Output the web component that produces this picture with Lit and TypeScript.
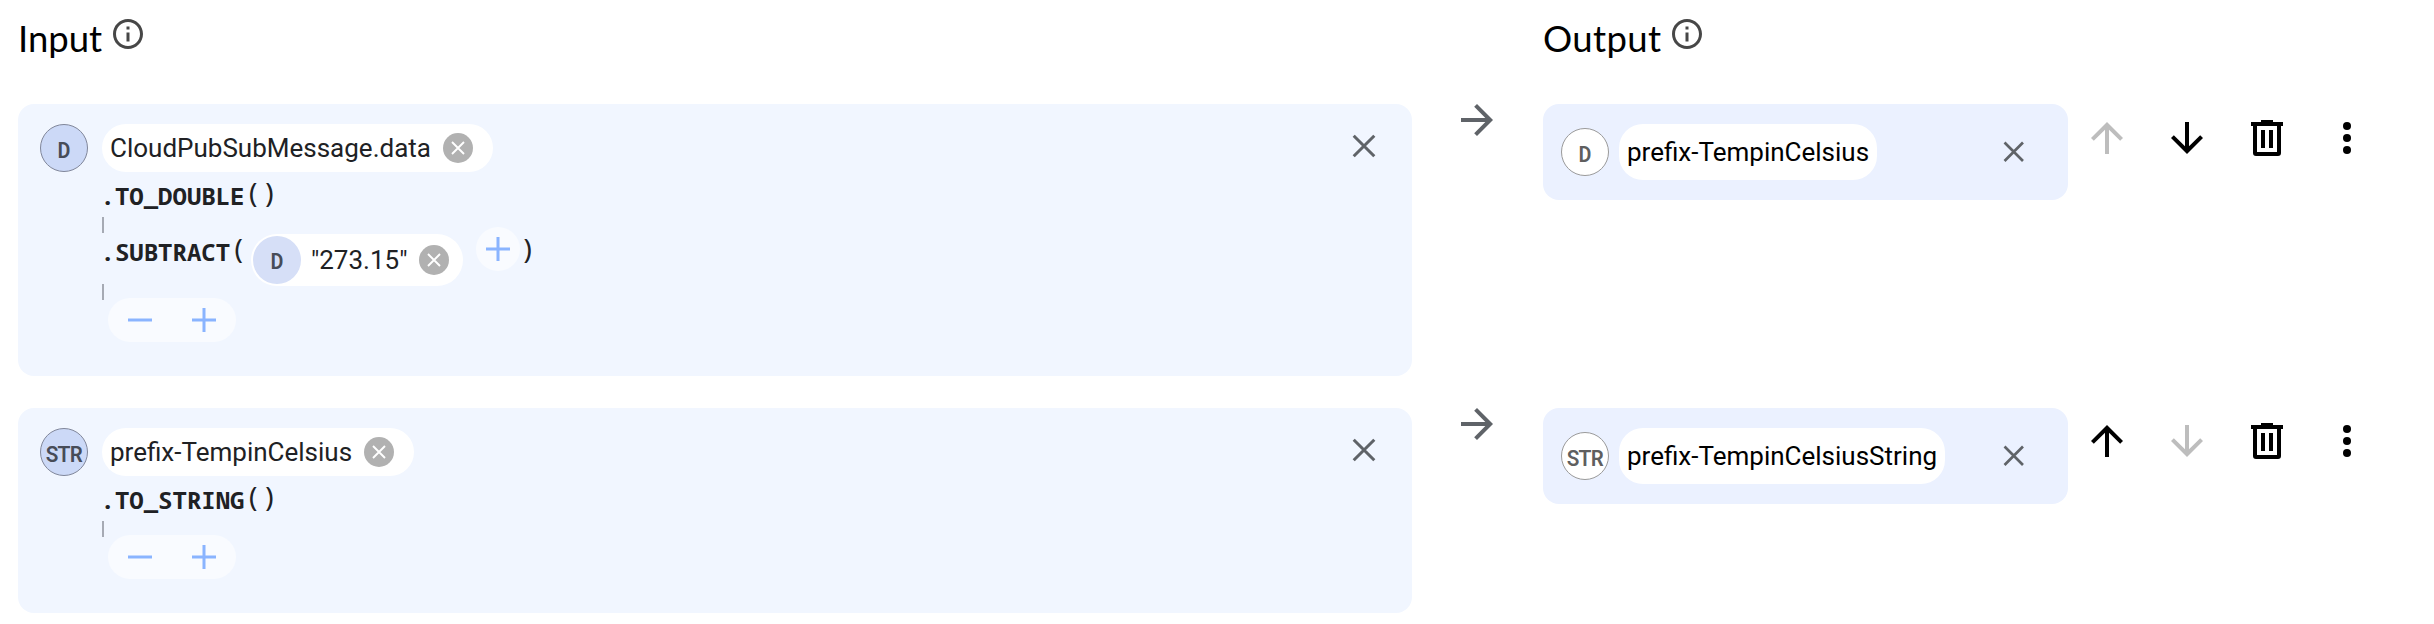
import { LitElement, html, css, svg, nothing } from "lit";
import { customElement, property } from "lit/decorators.js";

interface Icon {
  box: number;
  body: unknown;
}

const icons: Record<string, Icon> = {
  info: {
    box: 24,
    body: svg`<path d="M11 7h2v2h-2zm0 4h2v6h-2zm1-9C6.48 2 2 6.48 2 12s4.48 10 10 10 10-4.48 10-10S17.52 2 12 2zm0 18c-4.41 0-8-3.59-8-8s3.59-8 8-8 8 3.59 8 8-3.59 8-8 8z"></path>`,
  },
  up: {
    box: 24,
    body: svg`<path d="M4 12l1.41 1.41L11 7.83V20h2V7.83l5.58 5.59L20 12l-8-8-8 8z"></path>`,
  },
  down: {
    box: 24,
    body: svg`<path d="M20 12l-1.41-1.41L13 16.17V4h-2v12.17l-5.58-5.59L4 12l8 8 8-8z"></path>`,
  },
  right: {
    box: 24,
    body: svg`<path d="M12 4l-1.41 1.41L16.17 11H4v2h12.17l-5.58 5.59L12 20l8-8z"></path>`,
  },
  close: {
    box: 24,
    body: svg`<path d="M1.7 1.7 22.3 22.3M22.3 1.7 1.7 22.3" stroke="currentColor" stroke-width="3"></path>`,
  },
  plus: {
    box: 24,
    body: svg`<path d="M0 12h24M12 0v24" stroke="currentColor" stroke-width="3"></path>`,
  },
  minus: {
    box: 24,
    body: svg`<path d="M0 12h24" stroke="currentColor" stroke-width="3"></path>`,
  },
  remove: {
    box: 30,
    body: svg`<circle cx="15" cy="15" r="15"></circle><path d="M9 9 21 21M21 9 9 21" stroke="#fff" stroke-width="1.9"></path>`,
  },
  trash: {
    box: 36,
    body: svg`<path fill-rule="evenodd" d="M12 0h12v2h10v4h-2v27a3 3 0 0 1-3 3H7a3 3 0 0 1-3-3V6H2V2h10zM8 6v26h20V6zM12 10h4v18h-4zM20 10h4v18h-4z"></path>`,
  },
  more: {
    box: 32,
    body: svg`<circle cx="16" cy="4" r="4"></circle><circle cx="16" cy="16" r="4"></circle><circle cx="16" cy="28" r="4"></circle>`,
  },
};

@customElement("ui-icon")
class UiIcon extends LitElement {
  @property() name = "info";

  static styles = css`
    :host { display: block; flex: none; }
    svg { display: block; width: 100%; height: 100%; fill: currentColor; }
  `;

  render() {
    const icon = icons[this.name];
    return html`<svg viewBox="0 0 ${icon.box} ${icon.box}">${icon.body}</svg>`;
  }
}

interface Fn {
  name: string;
  arg?: { type: string; value: string };
}

interface Mapping {
  type: string;
  source: string;
  fns: Fn[];
  target: string;
  first?: boolean;
  last?: boolean;
}

const mappings: Mapping[] = [
  {
    type: "D",
    source: "CloudPubSubMessage.data",
    fns: [{ name: ".TO_DOUBLE" }, { name: ".SUBTRACT", arg: { type: "D", value: '"273.15"' } }],
    target: "prefix-TempinCelsius",
    first: true,
  },
  {
    type: "STR",
    source: "prefix-TempinCelsius",
    fns: [{ name: ".TO_STRING" }],
    target: "prefix-TempinCelsiusString",
    last: true,
  },
];

@customElement("app-root")
class AppRoot extends LitElement {
  static styles = css`
    * { box-sizing: border-box; }
    :host {
      display: block;
      height: 624px;
      padding-left: 18px;
      overflow: hidden;
      background: #fff;
      color: #202124;
      font: 26px Roboto, sans-serif;
    }
    .grid { display: grid; grid-template-columns: 1394px 131px 525px 1fr; }
    .head { height: 104px; }
    .row { margin-bottom: 32px; align-items: start; }
    .title {
      display: flex;
      gap: 7.5px;
      padding-top: 16px;
      font: 36.5px/44px Lato, sans-serif;
      color: #000;
    }
    .title.out { grid-column: 3; letter-spacing: 0.35px; }
    .title ui-icon { width: 36px; height: 36px; color: #474747; }

    .input {
      display: flex;
      align-items: flex-start;
      padding: 20px 36px 34px 22px;
      border-radius: 16px;
      background: #f1f6ff;
    }
    .badge {
      flex: none;
      width: 48px;
      height: 48px;
      padding-top: 3px;
      border: 1px solid #80869a;
      border-radius: 50%;
      background: #ccd9f7;
      color: #474c58;
      font: 600 21.5px/43px "Roboto Mono", monospace;
      letter-spacing: -0.8px;
      text-indent: -0.8px;
      text-align: center;
    }
    .body { flex: 1; margin-left: 14px; }
    .chip {
      display: flex;
      align-items: center;
      width: max-content;
      height: 48px;
      padding: 0 20px 0 8px;
      border-radius: 24px;
      background: #fff;
    }
    .remove { width: 30px; height: 30px; margin-left: 12px; color: #b1b1b1; }
    .fn {
      display: flex;
      align-items: flex-start;
      height: 47px;
      margin-left: -1.5px;
      font: 24px/47px "Noto Sans Mono", monospace;
    }
    .fn b { font-weight: 700; }
    .paren { font-size: 28px; line-height: 0; vertical-align: 2px; }
    .fn.args { height: 52px; margin-top: 1px; line-height: 35px; }
    .arg {
      display: flex;
      align-items: center;
      height: 52px;
      margin-left: 4px;
      padding: 0 14px 0 2px;
      border-radius: 26px;
      background: #fff;
      font: 26px Roboto, sans-serif;
    }
    .arg .badge { margin-right: 10px; padding-top: 1px; border: 0; background: #d6dff7; line-height: 47px; }
    .arg .remove { margin-left: 11px; }
    .add {
      display: flex;
      align-items: center;
      justify-content: center;
      width: 44px;
      height: 44px;
      margin: -7px 0 0 13px;
      border-radius: 50%;
      background: #f9fbff;
      color: #8ab4ff;
    }
    .tick { width: 2px; height: 16px; margin-top: -2px; background: #a6aab4; }
    .pill {
      display: flex;
      align-items: center;
      gap: 40px;
      width: 128px;
      height: 44px;
      margin: -2px 0 0 6px;
      padding-left: 20px;
      border-radius: 22px;
      background: #f9fbff;
      color: #8ab4ff;
    }
    .s24 { width: 24px; height: 24px; }
    .clear { width: 24px; height: 24px; margin-top: 10px; color: #5f6368; }

    .to { width: 48px; height: 48px; margin: -8px 0 0 41.4px; color: #5f6368; }

    .output {
      display: flex;
      align-items: center;
      height: 96px;
      padding: 0 43.5px 0 18px;
      border-radius: 16px;
      background: #ebf1ff;
    }
    .output .badge { border-color: #9a9a9a; background: #fff; color: #5f5f5f; }
    .output .chip { height: 56px; margin-left: 10px; padding: 0 8px; color: #000; }
    .output .clear { width: 21.5px; height: 21.5px; margin: 0 0 0 auto; }

    .actions { display: flex; align-items: center; height: 68px; padding-left: 15.4px; gap: 32px; color: #000; }
    .row.last .actions { height: 66px; }
    .actions ui-icon { width: 48px; height: 48px; }
    .actions .trash { width: 36px; height: 36px; margin: 0 6px; }
    .actions .more { width: 32px; height: 32px; margin: 0 8px; }
    .off { color: #bdbdbd; }
  `;

  private fn(f: Fn) {
    return html`
      <div class="fn ${f.arg ? "args" : ""}">
        <span><b>${f.name}</b><span class="paren">${f.arg ? "(" : "()"}</span></span>
        ${f.arg
          ? html`
              <div class="arg">
                <div class="badge">${f.arg.type}</div>
                ${f.arg.value}
                <ui-icon class="remove" name="remove"></ui-icon>
              </div>
              <div class="add"><ui-icon class="s24" name="plus"></ui-icon></div>
              <span><span class="paren">)</span></span>
            `
          : nothing}
      </div>
      <div class="tick"></div>
    `;
  }

  private row(m: Mapping) {
    return html`
      <div class="grid row ${m.last ? "last" : ""}">
        <div class="input">
          <div class="badge">${m.type}</div>
          <div class="body">
            <div class="chip">${m.source}<ui-icon class="remove" name="remove"></ui-icon></div>
            ${m.fns.map((f) => this.fn(f))}
            <div class="pill">
              <ui-icon class="s24" name="minus"></ui-icon>
              <ui-icon class="s24" name="plus"></ui-icon>
            </div>
          </div>
          <ui-icon class="clear" name="close"></ui-icon>
        </div>
        <ui-icon class="to" name="right"></ui-icon>
        <div class="output">
          <div class="badge">${m.type}</div>
          <div class="chip">${m.target}</div>
          <ui-icon class="clear" name="close"></ui-icon>
        </div>
        <div class="actions">
          <ui-icon class=${m.first ? "off" : ""} name="up"></ui-icon>
          <ui-icon class=${m.last ? "off" : ""} name="down"></ui-icon>
          <ui-icon class="trash" name="trash"></ui-icon>
          <ui-icon class="more" name="more"></ui-icon>
        </div>
      </div>
    `;
  }

  render() {
    return html`
      <div class="grid head">
        <div class="title">Input<ui-icon name="info"></ui-icon></div>
        <div class="title out">Output<ui-icon name="info"></ui-icon></div>
      </div>
      ${mappings.map((m) => this.row(m))}
    `;
  }
}
